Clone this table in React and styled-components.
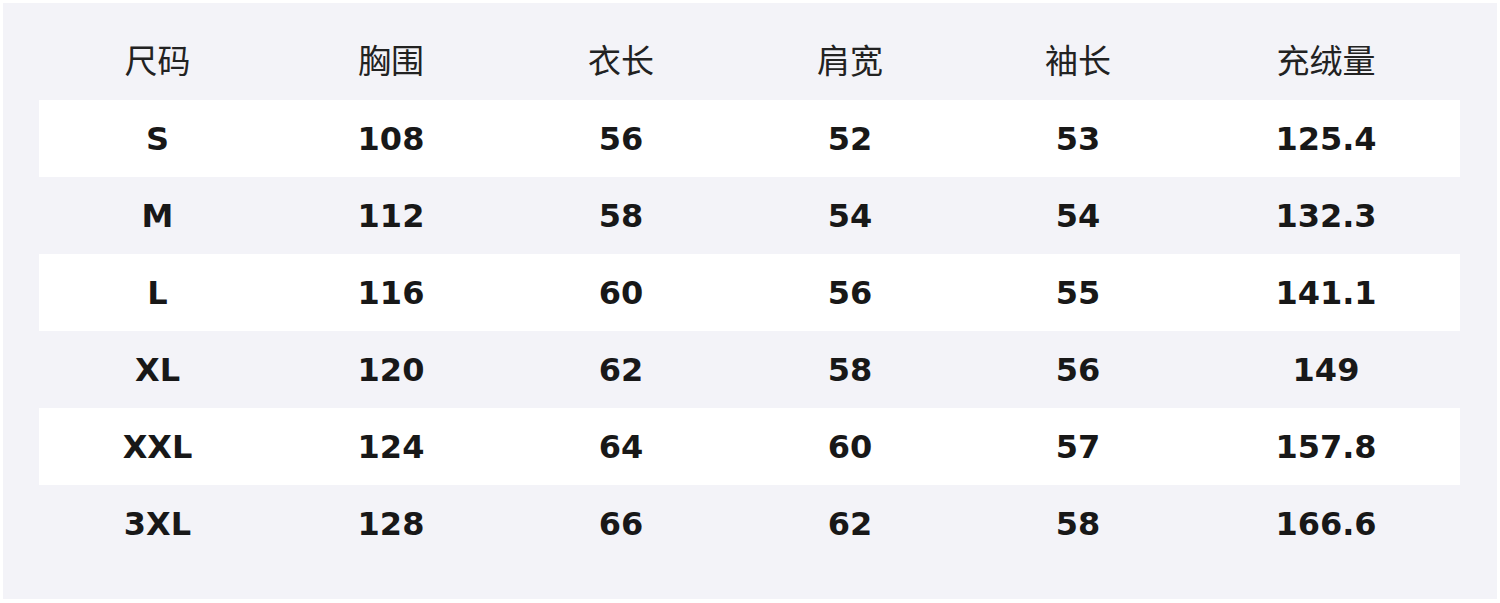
import React from "react";
import styled, { createGlobalStyle } from "styled-components";

const Global = createGlobalStyle`
  html, body { margin: 0; padding: 0; background: #ffffff; }
  #root { width: 1500px; height: 603px; }
`;

const Panel = styled.div`
  margin: 3px;
  width: 1494px;
  height: 596px;
  box-sizing: border-box;
  background: #f3f3f8;
  padding: 20px 37px 0 36px;
  display: flex;
  flex-direction: column;
`;

const COLS = "237px 230px 230px 228px 228px 268px";

const HeaderRow = styled.div`
  display: grid;
  grid-template-columns: ${COLS};
  height: 77px;
  box-sizing: border-box;
  padding-bottom: 4px;
  align-items: center;
`;

const HeadCell = styled.div`
  text-align: center;
  font-family: "Noto Sans CJK SC", "Noto Sans", sans-serif;
  font-size: 33px;
  font-weight: 400;
  color: #222222;
  line-height: 1;
`;

const Row = styled.div`
  display: grid;
  grid-template-columns: ${COLS};
  height: 77px;
  align-items: center;
  background: ${(p) => (p.$white ? "#ffffff" : "transparent")};
`;

const Cell = styled.div`
  text-align: center;
  font-family: "DejaVu Sans", "Noto Sans", sans-serif;
  font-size: 32px;
  font-weight: 700;
  color: #181818;
  line-height: 1;
`;

const headers = ["尺码", "胸围", "衣长", "肩宽", "袖长", "充绒量"];
const rows = [
  ["S", "108", "56", "52", "53", "125.4"],
  ["M", "112", "58", "54", "54", "132.3"],
  ["L", "116", "60", "56", "55", "141.1"],
  ["XL", "120", "62", "58", "56", "149"],
  ["XXL", "124", "64", "60", "57", "157.8"],
  ["3XL", "128", "66", "62", "58", "166.6"],
];

export default function App() {
  return (
    <>
      <Global />
      <Panel>
        <HeaderRow>
          {headers.map((h) => (
            <HeadCell key={h}>{h}</HeadCell>
          ))}
        </HeaderRow>
        {rows.map((r, i) => (
          <Row key={r[0]} $white={i % 2 === 0}>
            {r.map((c, j) => (
              <Cell key={j}>{c}</Cell>
            ))}
          </Row>
        ))}
      </Panel>
    </>
  );
}
